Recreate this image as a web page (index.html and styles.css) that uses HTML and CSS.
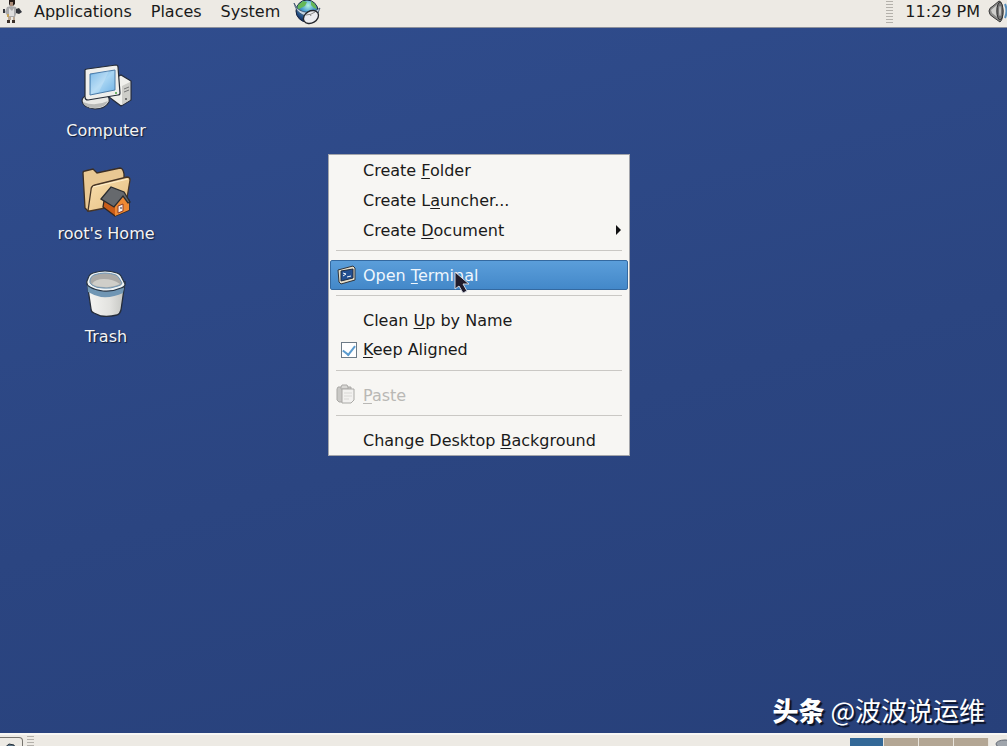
FILE: index.html
```html
<!DOCTYPE html>
<html lang="en">
<head>
  <meta charset="UTF-8">
  <meta name="viewport" content="width=device-width, initial-scale=1.0">
  <title>Desktop</title>
  <link rel="stylesheet" href="styles.css">
</head>
<body>
  <header class="panel top-panel">
    <nav class="main-menu">
      <button type="button" class="foot" aria-label="Main menu">
        <svg width="22" height="24" viewBox="0 0 22 24">
          <path d="M9 0h6v4l-2 2h-3L9 4z" fill="#241a17"/>
          <path d="M10 2h3v4h-3z" fill="#a98b78"/>
          <path d="M7 7l4-1 5 1 1 4-2 6H8L5 12z" fill="#a9a9ab"/>
          <path d="M9 8l3 3 2-3v8H9z" fill="#dedede"/>
          <path d="M3 9l2 0v4l-2 0zM16 9l3-1 3 4-3 2-3-1z" fill="#33363d"/>
          <path d="M8 17h3v3H8zM13 17h2v3h-2z" fill="#bba894"/>
          <path d="M7 20h3v3H7zM12 20h3v3h-3z" fill="#3b3029"/>
          <path d="M7 14h2v3H7z" fill="#c6a35c"/>
        </svg>
      </button>
      <button type="button">Applications</button>
      <button type="button">Places</button>
      <button type="button">System</button>
      <button type="button" class="browser" aria-label="Web browser">
        <svg width="28" height="26" viewBox="0 0 28 26">
          <defs>
            <radialGradient id="globe" cx=".55" cy=".25" r=".75">
              <stop offset="0" stop-color="#b4f2e0"/>
              <stop offset=".4" stop-color="#4b9fd0"/>
              <stop offset="1" stop-color="#10265b"/>
            </radialGradient>
          </defs>
          <ellipse cx="14" cy="11" rx="11" ry="11" fill="url(#globe)" stroke="#14213d"/>
          <path d="M5 5l5-4 4 1-2 4-4 2-4 2zM18 1l4 3 2 5-3-1-3-3z" fill="#65b857"/>
          <path d="M1 3l3 5q5 5 13 4 6-1 10-4l-2 5q-8 4-15 2Q3 12 1 3z" fill="#c4d4e2" stroke="#29415e" stroke-width=".7"/>
          <ellipse cx="18" cy="17" rx="8" ry="6" transform="rotate(-30 18 17)" fill="#ececf0" stroke="#24262c" stroke-width="1.4"/>
          <path d="M13 15q5 0 9-3M17 14l1 2" fill="none" stroke="#888"/>
        </svg>
      </button>
    </nav>
    <div class="tray">
      <span class="grip"></span>
      <time>11:29 PM</time>
      <button type="button" class="volume" aria-label="Volume">
        <svg width="19" height="24" viewBox="0 0 19 24">
          <path d="M1 11q0-3 4-5l6-5q3 0 4 10 0 9-3 11l-7-5q-4-2-4-6z" fill="#8b8b89" stroke="#3b3b3b"/>
          <path d="M3 10l6-5q-2 6 0 12l-5-4z" fill="#d0d0cd"/>
          <ellipse cx="12" cy="11" rx="3" ry="9" fill="#777" stroke="#333"/>
          <ellipse cx="12" cy="11" rx="1" ry="5" fill="#c2c2c0"/>
          <path d="M17 4q3 7 0 14" fill="none" stroke="#568ebd" stroke-width="2"/>
        </svg>
      </button>
    </div>
  </header>

  <main class="desktop">
    <div class="icons">
      <a href="#computer" class="icon">
        <svg width="54" height="50" viewBox="0 0 54 50">
          <defs>
            <linearGradient id="screen" x2="1" y2="1">
              <stop offset="0" stop-color="#5fa9e2"/>
              <stop offset=".5" stop-color="#a8d5f3"/>
              <stop offset="1" stop-color="#6db0e5"/>
            </linearGradient>
          </defs>
          <path d="M34 15l8-4 10 6v19l-10 6-12-9z" fill="#f0f0ec" stroke="#252b39" stroke-width="1.2"/>
          <path d="M43 22l8-4v18l-8 5z" fill="#cdcdc8"/>
          <path d="M45 25l5-2M45 28l5-2" stroke="#777" stroke-width="1"/>
          <circle cx="47" cy="35" r="1" fill="#555"/>
          <path d="M3 37q0-5 7-6l18 0q3 3 2 7-4 7-14 7-12-1-13-8z" fill="#e9e9e5" stroke="#2a303c" stroke-width="1.2"/>
          <path d="M4 38q12 5 25-1-3 7-13 7-10 0-12-6z" fill="#b9bab7"/>
          <path d="M6 6q0-1 2-1l29-4q2 0 2 2l2 26q0 2-2 2L9 36q-3 0-3-3z" fill="#efefec" stroke="#252b36" stroke-width="1.2"/>
          <path d="M11 10l25-4v20l-25 5z" fill="url(#screen)" stroke="#4d7ca9"/>
          <path d="M12 11l18-4-10 21-8 2z" fill="#ffffff" opacity=".2"/>
          <circle cx="37" cy="29" r="1" fill="#4aa23f"/>
        </svg>
        <span>Computer</span>
      </a>
      <a href="#home" class="icon">
        <svg width="54" height="50" viewBox="0 0 54 50">
          <defs>
            <linearGradient id="folder" x2="1" y2="1">
              <stop offset="0" stop-color="#f9dfae"/>
              <stop offset="1" stop-color="#e4bd80"/>
            </linearGradient>
          </defs>
          <path d="M4 6q0-2 2-2l8-2 4 4 23-5q3 0 4 6v22L9 44l-3-3z" fill="#e9c893" stroke="#3b2e25" stroke-width="1.3"/>
          <path d="M9 44l3-21q0-4 4-5l32-8q3 0 3 3l-4 24-36 7z" fill="url(#folder)" stroke="#473526" stroke-width="1.3"/>
          <path d="M14 20l35-8" stroke="#fff0cf" stroke-width="1"/>
          <path d="M25 34l12-10 13 9v10l-14 6-12-9z" fill="#c95c19" stroke="#302620" stroke-width="1.3"/>
          <path d="M36 37l9-10 5 7v9l-14 6z" fill="#ee8934"/>
          <path d="M22 32l10-12 13 5 6 10-2 1-5-7-9 11z" fill="#66696d" stroke="#292c30" stroke-width="1.3"/>
          <path d="M39 39l5-2v7l-5 2z" fill="#f4eeee" stroke="#8e3e25"/>
          <path d="M42 40v2" stroke="#334" stroke-width="1"/>
        </svg>
        <span>root's Home</span>
      </a>
      <a href="#trash" class="icon">
        <svg width="54" height="50" viewBox="0 0 54 50">
          <defs>
            <linearGradient id="bin" x2="1">
              <stop offset="0" stop-color="#f6f6f4"/>
              <stop offset=".6" stop-color="#e2e2df"/>
              <stop offset="1" stop-color="#c3c4c0"/>
            </linearGradient>
          </defs>
          <path d="M8 12l4 27q0 3 3 4l7 3q8 1 16-1 3-1 4-5l4-28z" fill="url(#bin)" stroke="#252d3b" stroke-width="1.3"/>
          <path d="M8 12l1 10q5 3 13 5 12 1 22-4l2-11z" fill="#7096b4"/>
          <path d="M14 3q12-4 24 0 3 1 4 3l4 8q0 3-4 4-9 4-18 3-8-1-13-4-4-2-3-6l2-5q1-2 4-3z" fill="#eef2f3" stroke="#273444" stroke-width="1.2"/>
          <path d="M15 5q11-4 22 0 2 1 3 3l3 5q0 2-4 3-8 3-15 2-7 0-11-3-3-2-2-5 1-4 4-5z" fill="#aaa9a6" stroke="#6f96b6"/>
          <path d="M13 14q3-5 12-5 9 0 16 5-8 4-16 3-8 0-12-3z" fill="#cfcec9"/>
        </svg>
        <span>Trash</span>
      </a>
    </div>

    <div class="context-menu" role="menu">
      <button type="button" role="menuitem">Create <u>F</u>older</button>
      <button type="button" role="menuitem">Create L<u>a</u>uncher...</button>
      <button type="button" role="menuitem" class="has-submenu">Create <u>D</u>ocument</button>
      <hr>
      <button type="button" role="menuitem" class="active">
        <svg class="item-icon" width="20" height="20" viewBox="0 0 20 20">
          <path d="M1 5l15-4 2 2v12L4 19l-2-2z" fill="#e6dfcb" stroke="#30343a"/>
          <path d="M4 6l12-2v9L4 16z" fill="#234f91" stroke="#202b3f"/>
          <path d="M6 8l3 1-3 2M10 12l4-1" fill="none" stroke="#f5f7fa"/>
        </svg>
        Open <u>T</u>erminal
      </button>
      <hr>
      <button type="button" role="menuitem">Clean <u>U</u>p by Name</button>
      <label class="check-item"><input type="checkbox" checked><span><u>K</u>eep Aligned</span></label>
      <hr>
      <button type="button" role="menuitem" disabled>
        <svg class="item-icon" width="20" height="20" viewBox="0 0 20 20">
          <path d="M2 3h13v15H3L1 16V5z" fill="#c9c8c5" stroke="#aaa9a6"/>
          <path d="M5 3l1-2h5l1 2v2H5z" fill="#d8d7d4" stroke="#aaa9a6"/>
          <path d="M6 5h12v11l-3 3H6z" fill="#f2f1ef" stroke="#aaa9a6"/>
          <path d="M8 9h8M8 12h8M8 15h5" stroke="#d9d8d5"/>
        </svg>
        <u>P</u>aste
      </button>
      <hr>
      <button type="button" role="menuitem">Change Desktop <u>B</u>ackground</button>
      <svg class="pointer" width="18" height="24" viewBox="0 0 18 24">
        <path d="M2 1v17l4-3 4 7 4-2-4-7h6z" fill="#201c2c" stroke="#d5d7df" stroke-width="1"/>
      </svg>
    </div>

    <p class="signature"><strong>头条</strong> @波波说运维</p>
  </main>

  <footer class="panel bottom-panel">
    <button type="button" class="show-desktop" aria-label="Show desktop">
      <svg width="18" height="16" viewBox="0 0 18 16">
        <path d="M2 9l7-6 5 1 2 6-9 5z" fill="#5a7486" stroke="#28323b"/>
        <path d="M4 9l6-4 3 3-6 4z" fill="#b5c9d4"/>
      </svg>
    </button>
    <span class="grip"></span>
    <div class="workspaces">
      <button type="button" class="current" aria-label="Workspace 1"></button>
      <button type="button" aria-label="Workspace 2"></button>
      <button type="button" aria-label="Workspace 3"></button>
      <button type="button" aria-label="Workspace 4"></button>
    </div>
    <button type="button" class="panel-trash" aria-label="Trash">
      <svg width="20" height="22" viewBox="0 0 20 22">
        <path d="M2 5l2 15h12l2-15z" fill="#d6d6d3" stroke="#666"/>
        <ellipse cx="10" cy="5" rx="9" ry="4" fill="#9fa5ac" stroke="#676d78"/>
      </svg>
    </button>
  </footer>
</body>
</html>
```
FILE: styles.css
```css
* {
  box-sizing: border-box;
}
body {
  margin: 0;
  height: 100vh;
  display: flex;
  flex-direction: column;
  overflow: hidden;
  font-family: "DejaVu Sans", sans-serif;
  font-size: 16px;
  color: #1a1a1a;
}
button {
  margin: 0;
  padding: 0;
  border: 0;
  background: none;
  font: inherit;
  color: inherit;
}
svg {
  display: block;
}

/* panels */
.panel {
  display: flex;
  flex-shrink: 0;
  background: #edeae4;
  overflow: hidden;
}
.top-panel {
  height: 28px;
  justify-content: space-between;
  border-bottom: 1px solid #8d919c;
  line-height: 24px;
}
.main-menu {
  display: flex;
  align-items: flex-start;
  gap: 19px;
}
.foot {
  margin-right: -7px;
}
.browser {
  margin-left: -6px;
}
.tray {
  display: flex;
  align-items: flex-start;
}
.tray time {
  margin: 0 8px 0 12px;
}
.grip {
  width: 7px;
  height: 24px;
  background: repeating-linear-gradient(#edeae4 0 1px, #b4b1ab 1px 2px, #edeae4 2px 3px);
}

/* desktop */
.desktop {
  position: relative;
  flex: 1;
  min-height: 0;
  background: linear-gradient(165deg, #304d8e, #2b4581 55%, #27407a);
}
.icons {
  display: flex;
  flex-direction: column;
  gap: 26px;
  width: 212px;
  padding-top: 36px;
}
.icon {
  display: flex;
  flex-direction: column;
  align-items: center;
  gap: 6px;
  color: #f4f4f4;
  line-height: 21px;
  text-decoration: none;
  text-shadow: 1px 1px 1px #101b35;
}

.context-menu {
  position: absolute;
  left: 328px;
  top: 126px;
  width: 302px;
  padding: 0 1px;
  border: 1px solid #a3a5ab;
  background: #f7f6f3;
}
.context-menu button,
.check-item {
  position: relative;
  display: block;
  width: 100%;
  height: 30px;
  padding: 0 0 0 33px;
  line-height: 32px;
  text-align: left;
  white-space: nowrap;
}
.context-menu u {
  text-underline-offset: 2px;
}
.context-menu hr {
  height: 1px;
  margin: 5px 6px 9px;
  border: 0;
  background: #cac8c4;
}
.context-menu .active {
  padding-left: 32px;
  border: 1px solid #3469a0;
  border-radius: 2px;
  background: linear-gradient(#5b9eda, #4388c9);
  color: #eef6fd;
  line-height: 30px;
}
.context-menu button:disabled {
  color: #b9b8b5;
}
.item-icon {
  position: absolute;
  left: 6px;
  top: 4px;
}
.has-submenu::after {
  content: "";
  position: absolute;
  right: 7px;
  top: 10px;
  border: 5px solid transparent;
  border-left-color: #111;
  border-right: 0;
}
.check-item {
  display: flex;
  align-items: center;
  gap: 6px;
  padding-left: 11px;
}
.check-item input {
  appearance: none;
  width: 16px;
  height: 16px;
  margin: 0;
  border: 1px solid #6d7b87;
  background: #fff;
  display: flex;
  justify-content: center;
  align-items: center;
}
.check-item input:checked::after {
  content: "";
  width: 6px;
  height: 10px;
  margin-bottom: 3px;
  border: solid #5b9bce;
  border-width: 0 2px 2px 0;
  transform: rotate(38deg);
}
.pointer {
  position: absolute;
  left: 124px;
  top: 116px;
}
.signature {
  position: absolute;
  right: 22px;
  bottom: 5px;
  margin: 0;
  font-family: "Noto Sans CJK SC", sans-serif;
  font-size: 26px;
  line-height: 36px;
  color: #fff;
  text-shadow: 2px 2px 1px #0b1124;
}
.signature strong {
  font-weight: 900;
}

/* bottom */
.bottom-panel {
  height: 13px;
  border-top: 2px solid #f8f7f4;
}
.show-desktop {
  width: 23px;
  height: 24px;
  margin: 2px 4px 0 0;
  border: 1px solid #77756f;
  border-left: 0;
  border-radius: 0 4px 0 0;
}
.workspaces {
  display: flex;
  gap: 1px;
  margin: 3px 6px 0 auto;
  padding-right: 1px;
  height: 24px;
  background: #e8e4dc;
}
.workspaces button {
  width: 34px;
  background: #b3a694;
}
.workspaces .current {
  width: 33px;
  background: #336897;
}
.panel-trash {
  width: 12px;
  height: 22px;
  margin-top: 4px;
}
```
